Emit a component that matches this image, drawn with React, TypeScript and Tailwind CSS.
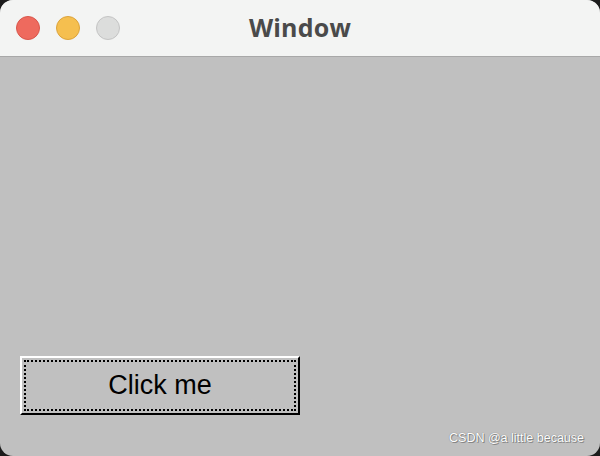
import React from 'react';

const App: React.FC = () => {
  return (
    <div className="w-[600px] h-[456px] bg-[#1c1c1c] font-['Liberation_Sans',Arial,sans-serif]">
      <div className="relative w-full h-full rounded-[13px] overflow-hidden bg-[#c0c0c0] flex flex-col">
        {/* Title bar */}
        <div className="relative h-[57px] bg-[#f3f4f3] border-b border-[#a8a8a8] flex items-center">
          <div className="flex items-center gap-[16px] pl-[16px]">
            <span className="w-[24px] h-[24px] rounded-full bg-[#ee6a5e] border border-[#d9564b]"></span>
            <span className="w-[24px] h-[24px] rounded-full bg-[#f5bf4f] border border-[#dca33b]"></span>
            <span className="w-[24px] h-[24px] rounded-full bg-[#dcdddc] border border-[#c4c4c4]"></span>
          </div>
          <div className="absolute inset-0 flex items-center justify-center pointer-events-none">
            <span className="text-[25px] font-bold text-[#4a4a4a] font-['Open_Sans',sans-serif] tracking-[0.2px]">
              Window
            </span>
          </div>
        </div>

        {/* Body */}
        <div className="flex-1 flex flex-col justify-end pl-[20px] pb-[41px]">
          <button className="w-[280px] h-[59px] bg-[#c0c0c0] border-t-2 border-l-2 border-white border-r-2 border-b-2 border-r-black border-b-black p-[2px]">
            <div className="w-full h-full border-2 border-dotted border-black flex items-center justify-center">
              <span className="text-[27px] text-black leading-none">Click me</span>
            </div>
          </button>
        </div>

        {/* Watermark */}
        <div className="absolute right-[16px] bottom-[8px] text-[12.5px] text-white [text-shadow:0_0_1px_#666,1px_1px_0_#8a8a8a]">
          CSDN @a little because
        </div>
      </div>
    </div>
  );
};

export default App;
